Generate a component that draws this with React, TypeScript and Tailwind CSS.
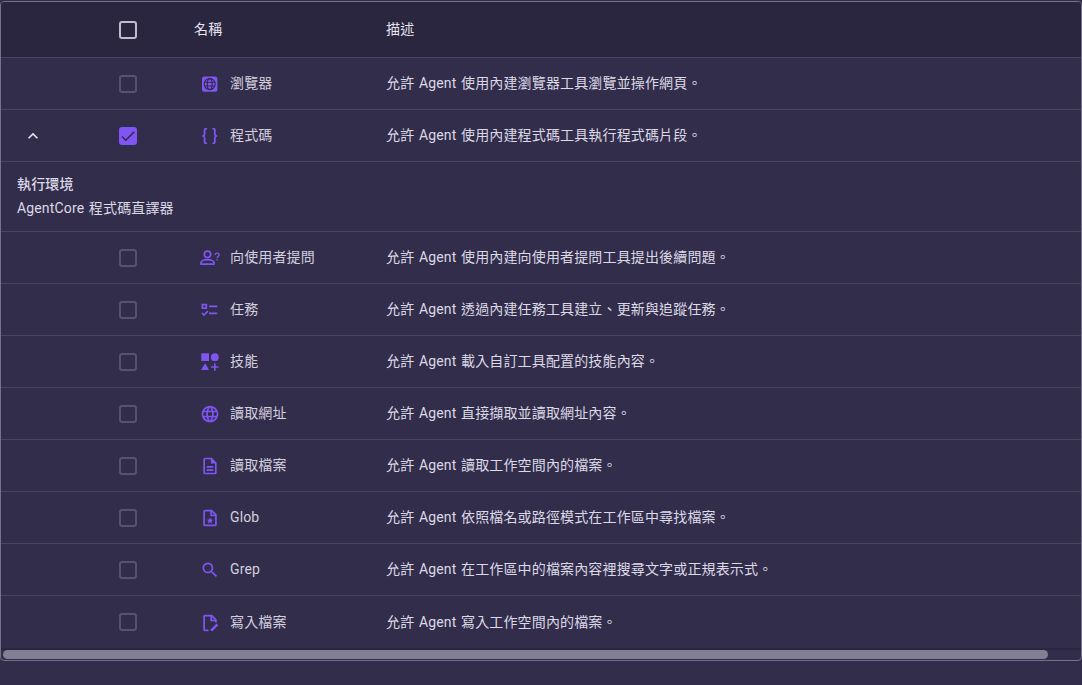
import React from "react";
import { MdLanguage, MdSearch, MdOutlineDescription, MdKeyboardArrowUp, MdCheck } from "react-icons/md";

const cls = "w-5 h-5";

const BrowserIcon = () => (
  <svg viewBox="0 0 20 20" className={cls}>
    <rect x="2" y="2.500" width="15.400" height="15.300" rx="2.500" fill="#7f56f3" />
    <g fill="none" stroke="#2f2a47" strokeWidth="1.100">
      <circle cx="9.700" cy="10.100" r="5.500" />
      <ellipse cx="9.700" cy="10.100" rx="2.400" ry="5.500" />
      <path d="M4.400 8.200h10.600M4.400 12h10.600" />
    </g>
  </svg>
);

const BracesIcon = () => (
  <svg viewBox="0 0 20 20" className={cls} fill="none" stroke="#7f56f3" strokeWidth="1.800" strokeLinecap="round" strokeLinejoin="round">
    <path d="M6.200 2.700C4.900 2.700 4.600 3.400 4.600 4.400v3.400c0 1-.5 1.900-1.600 2.200 1.100.3 1.600 1.200 1.600 2.200v3.400c0 1 .3 1.700 1.600 1.700" />
    <path d="M13.200 2.700c1.300 0 1.600.7 1.600 1.700v3.400c0 1 .5 1.900 1.600 2.200-1.100.3-1.600 1.200-1.600 2.200v3.400c0 1-.3 1.700-1.600 1.700" />
  </svg>
);

const PersonQuestion = () => (
  <svg viewBox="0 0 20 20" className={cls} fill="none" stroke="#7f56f3" strokeWidth="1.700">
    <circle cx="7.500" cy="6.300" r="3.200" />
    <path d="M1 16.200v-1.400c0-1.900 3.200-3.200 6.500-3.200s6.500 1.300 6.500 3.200v1.400z" strokeLinejoin="round" />
    <path d="M15.200 7.100c0-2.600 3.900-2.600 3.900-.2 0 1.600-2 1.500-2 3.300" strokeWidth="1.400" />
    <path d="M17.100 11.200v1.400" strokeWidth="1.400" />
  </svg>
);

const TaskIcon = () => (
  <svg viewBox="0 0 20 20" className={cls} fill="none" stroke="#7f56f3" strokeWidth="1.700">
    <rect x="2.400" y="4.600" width="3.900" height="3.600" />
    <path d="M9 6.300h8.200M9 13.300h8.200" />
    <path d="M2 13l2 2 3.800-3.800" />
  </svg>
);

const Shapes = () => (
  <svg viewBox="0 0 20 20" className={cls} fill="#7f56f3">
    <rect x="1.300" y="1.300" width="7.700" height="7.700" />
    <circle cx="14.800" cy="5.200" r="3.900" />
    <path d="M5.100 11.200l4 6.800H1.100z" />
    <path d="M14 11.300h1.600v2.900h2.900v1.600h-2.900v2.900H14v-2.900h-2.900v-1.600H14z" />
  </svg>
);

const FileStar = () => (
  <svg viewBox="0 0 20 20" className={cls} fill="none" stroke="#7f56f3" strokeWidth="1.700">
    <path d="M11.700 2.600H5.100c-.6 0-1 .4-1 1v12.800c0 .6.4 1 1 1h9.800c.6 0 1-.4 1-1V6.900z" strokeLinejoin="round" />
    <path d="M11.200 2.600v4.900h4.700" />
    <path d="M10 9.300l1 2.200 2.300.2-1.800 1.500.6 2.300-2.100-1.200-2.100 1.200.6-2.300-1.800-1.500 2.300-.2z" fill="#7f56f3" stroke="none" />
  </svg>
);

const FileEdit = () => (
  <svg viewBox="0 0 20 20" className={cls} fill="none" stroke="#7f56f3" strokeWidth="1.700">
    <path d="M8.500 17.400H5.100c-.6 0-1-.4-1-1V3.600c0-.6.4-1 1-1h6.600l4.200 4.300v2.600" strokeLinejoin="round" />
    <path d="M11.200 2.600v4.900h4.700" />
    <path d="M10.800 18v-1.800l5.700-5.700 1.800 1.800-5.700 5.700z" fill="#7f56f3" stroke="none" />
  </svg>
);

const purple = "w-5 h-5 text-[#7f56f3]";

type Row = { icon: React.ReactNode; name: string; desc: string; checked?: boolean; expanded?: boolean; last?: boolean };

const rows: Row[] = [
  { icon: <BrowserIcon />, name: "瀏覽器", desc: "允許 Agent 使用內建瀏覽器工具瀏覽並操作網頁。" },
  { icon: <BracesIcon />, name: "程式碼", desc: "允許 Agent 使用內建程式碼工具執行程式碼片段。", checked: true, expanded: true },
  { icon: <PersonQuestion />, name: "向使用者提問", desc: "允許 Agent 使用內建向使用者提問工具提出後續問題。" },
  { icon: <TaskIcon />, name: "任務", desc: "允許 Agent 透過內建任務工具建立、更新與追蹤任務。" },
  { icon: <Shapes />, name: "技能", desc: "允許 Agent 載入自訂工具配置的技能內容。" },
  { icon: <MdLanguage className={purple} />, name: "讀取網址", desc: "允許 Agent 直接擷取並讀取網址內容。" },
  { icon: <MdOutlineDescription className={purple} />, name: "讀取檔案", desc: "允許 Agent 讀取工作空間內的檔案。" },
  { icon: <FileStar />, name: "Glob", desc: "允許 Agent 依照檔名或路徑模式在工作區中尋找檔案。" },
  { icon: <MdSearch className={purple} />, name: "Grep", desc: "允許 Agent 在工作區中的檔案內容裡搜尋文字或正規表示式。" },
  { icon: <FileEdit />, name: "寫入檔案", desc: "允許 Agent 寫入工作空間內的檔案。", last: true },
];

const Check = ({ on, header }: { on?: boolean; header?: boolean }) =>
  on ? (
    <span className="flex h-[18px] w-[18px] items-center justify-center rounded-[3px] bg-[#7f56f3]">
      <MdCheck className="h-[18px] w-[18px] text-[#2f2a47]" />
    </span>
  ) : (
    <span className={`block h-[18px] w-[18px] rounded-[3px] border-2 ${header ? "border-[#bfbccb]" : "border-[#57526e]"}`} />
  );

export default function App() {
  return (
    <div className="h-[685px] w-[1082px] overflow-hidden bg-[#322d4b] pt-px text-sm tracking-[0.15px] text-[#dcd9e6] [word-spacing:1px] [font-family:Roboto,'Noto_Sans_CJK_TC',sans-serif]">
      <div className="h-[660px] overflow-hidden rounded-[4px] border border-[#75718a]">
        <div className="flex h-[56px] items-center border-b border-[#4a4560] bg-[#2a2640] text-[#e6e4ee]">
          <div className="flex w-[136px] justify-end pt-px"><Check header /></div>
          <div className="w-[57px]" />
          <div className="w-[192px] -translate-y-px">名稱</div>
          <div className="-translate-y-px">描述</div>
        </div>
        {rows.map((r) => (
          <React.Fragment key={r.name}>
            <div className={`flex h-[52px] items-center ${r.last ? "" : "border-b border-[#4a4560]"}`}>
              <div className="flex w-[136px] items-center justify-between pl-[22px]">
                <div className="h-5 w-5">
                  {r.expanded && <MdKeyboardArrowUp className="h-5 w-5 text-[#e6e4ee]" />}
                </div>
                <Check on={r.checked} />
              </div>
              <div className="flex w-[93px] justify-end"><div className={`w-[30px] shrink-0 ${r.last ? "translate-y-px" : ""}`}>{r.icon}</div></div>
              <div className={`w-[156px] text-[#d2cfde] ${r.last ? "" : "-translate-y-px"}`}>{r.name}</div>
              <div className={r.last ? "" : "-translate-y-px"}>{r.desc}</div>
            </div>
            {r.expanded && (
              <div className="flex h-[70px] flex-col justify-center gap-1 border-b border-[#4a4560] px-4 pb-[2px]">
                <div className="font-medium leading-[20px]">執行環境</div>
                <div className="leading-[20px]">AgentCore 程式碼直譯器</div>
              </div>
            )}
          </React.Fragment>
        ))}
        <div className="h-[2px] bg-[#2a2640]" />
        <div className="ml-[2px] h-[9px] w-[1045px] rounded-full bg-[#827f94]" />
      </div>
    </div>
  );
}
